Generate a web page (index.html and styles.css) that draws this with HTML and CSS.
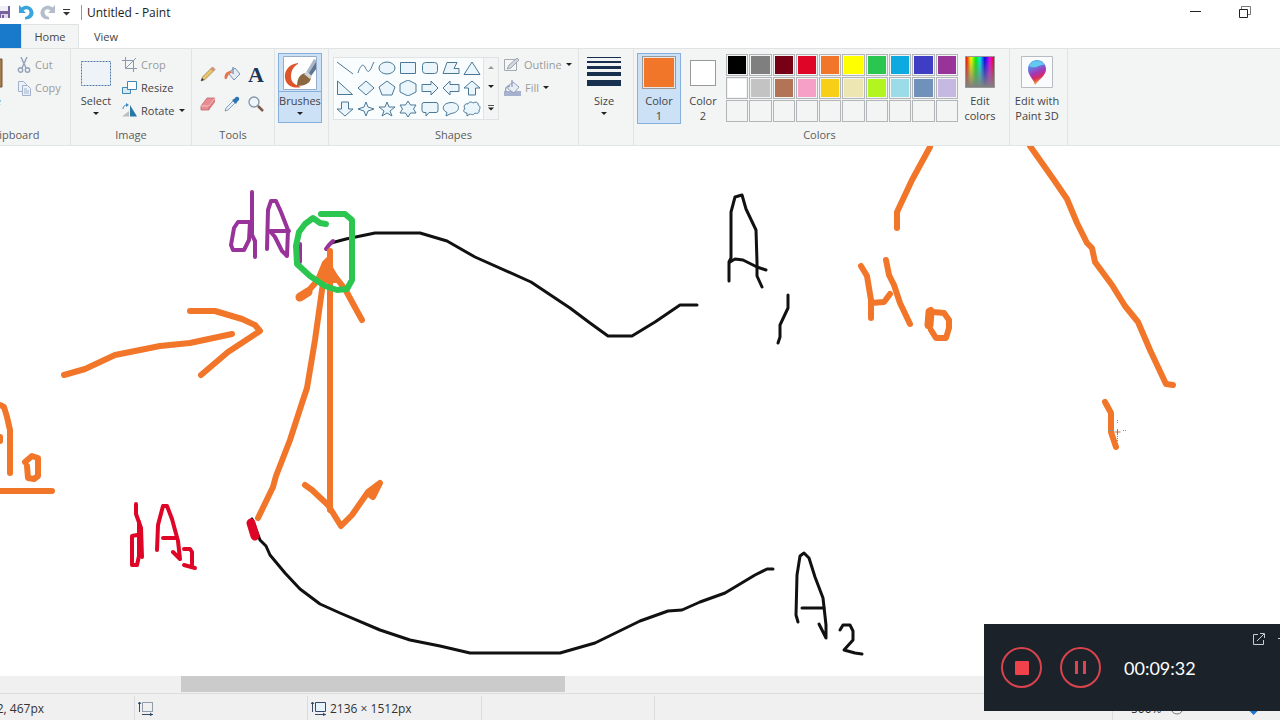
FILE: index.html
```html
<!DOCTYPE html>
<html lang="en">
<head>
    <meta charset="UTF-8">
    <meta name="viewport" content="width=device-width, initial-scale=1.0">
    <title>Untitled - Paint</title>
    <link rel="stylesheet" href="styles.css">
</head>
<body>
    <header class="titlebar">
        <button class="quick save" type="button" aria-label="Save">
            <svg width="14" height="14" viewBox="0 0 14 14"><path d="M0 1H13V13H0Z" fill="#77619f"/><path d="M3 1h8v5H3z" fill="#f1eef5"/><path d="M4 9h7v4H4z" fill="#ddd7e8"/><path d="M5 10h2v3H5z" fill="#77619f"/></svg>
        </button>
        <button class="quick" type="button" aria-label="Undo">
            <svg width="16" height="16" viewBox="0 0 16 16"><path d="M1 1v8h7L5.500 6.500C9 4 12 6 11.500 9 11 11 9.500 12.500 7 13v2.500c6 0 9-3.500 8.500-7.500C14 2 8 0 3.500 3.500Z" fill="#39a5dc"/></svg>
        </button>
        <button class="quick" type="button" aria-label="Redo">
            <svg width="16" height="16" viewBox="0 0 16 16"><path d="M15 1v8H8l2.500-2.500C7 4 4 6 4.500 9 5 11 6.500 12.500 9 13v2.500C3 15.500 0 12 .5 8 2 2 8 0 12.500 3.500Z" fill="#b4bdcb"/></svg>
        </button>
        <button class="quick customize" type="button" aria-label="Customize Quick Access Toolbar">
            <svg width="7" height="7" viewBox="0 0 7 7"><path d="M0 .5h7" stroke="#333"/><path d="M0 3h7L3.500 6.500Z" fill="#333"/></svg>
        </button>
        <h1 class="title">Untitled - Paint</h1>
        <div class="window-buttons">
            <button type="button" aria-label="Minimize"><svg width="12" height="12" viewBox="0 0 12 12"><path d="M0 5.500h11" stroke="#222"/></svg></button>
            <button type="button" aria-label="Restore"><svg width="12" height="12" viewBox="0 0 12 12" fill="none" stroke="#222"><path d="M.5 3.500h8v8h-8z"/><path d="M2.500 3V.5h9v8H9" stroke="#777"/></svg></button>
        </div>
    </header>

    <nav class="tabs">
        <button class="tab file" type="button">File</button>
        <button class="tab active" type="button">Home</button>
        <button class="tab" type="button">View</button>
    </nav>

    <section class="ribbon">
        <div class="group clipboard">
            <div class="group-body">
                <button class="big paste" type="button">
                    <svg width="32" height="32" viewBox="0 0 32 32"><path d="M2 3h29v28H2z" fill="#a47c50" stroke="#765632"/><path d="M7 8h17v20H7z" fill="#fff"/></svg>
                    <span>Paste</span>
                </button>
                <div class="stack">
                    <button class="small disabled" type="button">
                        <svg width="14" height="16" viewBox="0 0 14 16" fill="none" stroke="#94a2bb" stroke-width="1.400"><path d="M4 0l5 11M10 0L5 11"/><circle cx="3.500" cy="13" r="2.200"/><circle cx="10.500" cy="13" r="2.200"/></svg>
                        Cut
                    </button>
                    <button class="small disabled" type="button">
                        <svg width="14" height="16" viewBox="0 0 14 16" fill="#eef2f8" stroke="#a0b0ca"><path d="M1.500 1.500h5l3 3v7h-8z"/><path d="M5.500 5.500h5l3 3v7h-8zM7 9h3M7 11h5M7 13h5"/></svg>
                        Copy
                    </button>
                </div>
            </div>
            <div class="group-label">Clipboard</div>
        </div>

        <div class="group image">
            <div class="group-body">
                <button class="big" type="button">
                    <svg width="30" height="32" viewBox="0 0 30 32"><path d="M.5 5.500h29v24H.5z" fill="#eef3f8" stroke="#5178a6" stroke-dasharray="2 1"/></svg>
                    <span>Select</span>
                    <i class="caret"></i>
                </button>
                <div class="stack">
                    <button class="small disabled" type="button">
                        <svg width="15" height="15" viewBox="0 0 15 15" fill="none" stroke="#8a99ad"><path d="M3.500 0v11.500H15M0 3.500h11.500V15M3.500 11.500L14 1"/></svg>
                        Crop
                    </button>
                    <button class="small" type="button">
                        <svg width="15" height="15" viewBox="0 0 15 15" stroke="#4086b1"><path d="M.5 7.500h8v6h-8z" fill="#d5e9f4"/><path d="M5.500 1.500h9v8h-9z" fill="#fff"/></svg>
                        Resize
                    </button>
                    <button class="small" type="button">
                        <svg width="15" height="15" viewBox="0 0 15 15"><path d="M0 13.500L7 8v5.500Z" fill="#b9bec3"/><path d="M8 2v11.500h7Z" fill="#2778a6"/><path d="M1 6c0-3 2-4 4-4" fill="none" stroke="#3b88c2"/><path d="M4 0l3 2-3 2Z" fill="#3b88c2"/></svg>
                        Rotate <i class="caret"></i>
                    </button>
                </div>
            </div>
            <div class="group-label">Image</div>
        </div>

        <div class="group tools">
            <div class="group-body tool-grid">
                <button type="button" aria-label="Pencil"><svg width="16" height="16" viewBox="0 0 16 16"><path d="M1 15l1.500-4L12.500 1 15 3.500 5 13.500Z" fill="#ecc76a" stroke="#8c744a" stroke-width=".7"/><path d="M12.500 1L15 3.500l-2 2L10.500 3Z" fill="#d99083"/><path d="M1 15l1-3 2 2Z" fill="#333"/></svg></button>
                <button type="button" aria-label="Fill with color"><svg width="17" height="16" viewBox="0 0 17 16"><path d="M5 6l6-4 5 6-6 6-5-6Z" fill="#e3ebf5" stroke="#7a91b0"/><path d="M9 8V1" stroke="#7a91b0" stroke-width="1.300"/><path d="M9 6C5 4 1 6 .5 11c0 3 2 3 3 0L5 8Z" fill="#e5754d"/></svg></button>
                <button type="button" aria-label="Text" class="text-tool">A</button>
                <button type="button" aria-label="Eraser"><svg width="16" height="16" viewBox="0 0 16 16"><path d="M1 10L7 2h8l-6 8v4H1Z" fill="#e78d91" stroke="#bd686d" stroke-width=".8"/><path d="M9 14l6-8V2L9 10Z" fill="#d9767c"/><path d="M1 10h8l6-8" fill="none" stroke="#f7c2c5"/></svg></button>
                <button type="button" aria-label="Color picker"><svg width="16" height="16" viewBox="0 0 16 16"><path d="M1 15l1-3 7-7 2 2-7 7Z" fill="#e2edf6" stroke="#6e8ca8" stroke-width=".8"/><path d="M8 4l4 4 1-2 2-2c1-2-1-4-3-3l-2 2Z" fill="#2c75b3"/></svg></button>
                <button type="button" aria-label="Magnifier"><svg width="16" height="16" viewBox="0 0 16 16"><circle cx="6" cy="6" r="5" fill="#edf6fc" stroke="#8595a6" stroke-width="1.300"/><path d="M10 10l5 5" stroke="#7d5a49" stroke-width="2.500"/></svg></button>
            </div>
            <div class="group-label">Tools</div>
        </div>

        <div class="group brushes">
            <div class="group-body">
                <button class="big selected" type="button">
                    <svg width="34" height="34" viewBox="0 0 34 34"><path d="M.5.5h33v33H.5z" fill="#fff" stroke="#98adc7"/><path d="M15 7C6 8 1 15 2 22c1 8 9 11 16 9-5-2-10-4-10-10C8 14 11 10 15 8Z" fill="#de542b"/><path d="M22 18L31 3l2 1v9l-6 8Z" fill="#a9b7c8"/><path d="M26 17l7-11v7l-5 7Z" fill="#60758f"/><path d="M14 30c0-8 4-13 9-13l5 4c0 6-6 9-14 9Z" fill="#8b6840"/><path d="M21 18l6 5 2-3-5-4Z" fill="#d0d4d7"/></svg>
                    <span>Brushes</span>
                    <i class="caret"></i>
                </button>
            </div>
        </div>

        <div class="group shapes">
            <div class="group-body">
                <div class="gallery">
                    <div class="shape-grid">
                        <button type="button" aria-label="Line"><svg viewBox="0 0 18 16"><path d="M1 2l16 12"/></svg></button>
                        <button type="button" aria-label="Curve"><svg viewBox="0 0 18 16"><path d="M1 13C3 6 6 3 8 7s3 6 5 3c2-2 2-5 4-8"/></svg></button>
                        <button type="button" aria-label="Oval"><svg viewBox="0 0 18 16"><ellipse cx="9" cy="8" rx="8" ry="6"/></svg></button>
                        <button type="button" aria-label="Rectangle"><svg viewBox="0 0 18 16"><path d="M1.500 2.500h15v11h-15z"/></svg></button>
                        <button type="button" aria-label="Rounded rectangle"><svg viewBox="0 0 18 16"><rect x="1.500" y="2.500" width="15" height="11" rx="3"/></svg></button>
                        <button type="button" aria-label="Polygon"><svg viewBox="0 0 18 16"><path d="M5 2.500h10l-3 6h5v5H1Z"/></svg></button>
                        <button type="button" aria-label="Triangle"><svg viewBox="0 0 18 16"><path d="M9 2l8 12.500H1Z"/></svg></button>
                        <button type="button" aria-label="Right triangle"><svg viewBox="0 0 18 16"><path d="M1.500 1l15 13.500h-15Z"/></svg></button>
                        <button type="button" aria-label="Diamond"><svg viewBox="0 0 18 16"><path d="M9 1l8 7-8 7-8-7Z"/></svg></button>
                        <button type="button" aria-label="Pentagon"><svg viewBox="0 0 18 16"><path d="M9 1l8 6-3 8H4L1 7Z"/></svg></button>
                        <button type="button" aria-label="Hexagon"><svg viewBox="0 0 18 16"><path d="M9 0l8 4v8l-8 4-8-4V4Z"/></svg></button>
                        <button type="button" aria-label="Right arrow"><svg viewBox="0 0 18 16"><path d="M1 4.500h9V1l7 7-7 7v-3.500H1Z"/></svg></button>
                        <button type="button" aria-label="Left arrow"><svg viewBox="0 0 18 16"><path d="M17 4.500H8V1L1 8l7 7v-3.500h9Z"/></svg></button>
                        <button type="button" aria-label="Up arrow"><svg viewBox="0 0 18 16"><path d="M5.500 15V8H1l8-7 8 7h-4.500v7Z"/></svg></button>
                        <button type="button" aria-label="Down arrow"><svg viewBox="0 0 18 16"><path d="M5.500 1v7H1l8 7 8-7h-4.500V1Z"/></svg></button>
                        <button type="button" aria-label="Four-point star"><svg viewBox="0 0 18 16"><path d="M9 1l2 5 6 2-6 2-2 5-2-5-6-2 6-2Z"/></svg></button>
                        <button type="button" aria-label="Five-point star"><svg viewBox="0 0 18 16"><path d="M9 1l2 5h6l-5 4 2 5-5-3-5 3 2-5-5-4h6Z"/></svg></button>
                        <button type="button" aria-label="Six-point star"><svg viewBox="0 0 18 16"><path d="M9 0l2.500 4H17l-2.500 4 2.500 4h-5.500L9 16l-2.500-4H1l2.500-4L1 4h5.500Z"/></svg></button>
                        <button type="button" aria-label="Rounded callout"><svg viewBox="0 0 18 16"><path d="M3 1.500h12q2 0 2 2v6q0 2-2 2H8L5 15v-3.500H3q-2 0-2-2v-6q0-2 2-2Z"/></svg></button>
                        <button type="button" aria-label="Oval callout"><svg viewBox="0 0 18 16"><path d="M5 11.500C-1 9 0 2 9 1.500c10 0 10 10 0 11L4 15Z"/></svg></button>
                        <button type="button" aria-label="Cloud callout"><svg viewBox="0 0 18 16"><path d="M4 12C0 12 0 8 2 8 0 5 2 2 5 3c1-3 4-2 5-1 3-2 6 0 5 2 3 1 2 4 1 5 1 3-2 4-4 3-2 3-4 1-5 1l-3 2Z"/></svg></button>
                    </div>
                    <div class="gallery-scroll">
                        <button type="button" aria-label="Row up"><i class="caret up"></i></button>
                        <button type="button" aria-label="Row down"><i class="caret"></i></button>
                        <button type="button" aria-label="More shapes"><svg width="6" height="6" viewBox="0 0 6 6"><path d="M0 .5h6" stroke="#555"/><path d="M0 2.500h6L3 5.500Z" fill="#222"/></svg></button>
                    </div>
                </div>
                <div class="stack">
                    <button class="small disabled" type="button">
                        <svg width="16" height="15" viewBox="0 0 16 15"><path d="M.5 2.500h12v11H.5z" fill="#f5f6f7" stroke="#a2aab2"/><path d="M3 12l2-4 8-7 2 2-8 8Z" fill="#d1d5dc" stroke="#9097a3" stroke-width=".8"/></svg>
                        Outline <i class="caret"></i>
                    </button>
                    <button class="small disabled" type="button">
                        <svg width="17" height="16" viewBox="0 0 17 16"><path d="M0 11h17v5H0z" fill="#a6b1cd"/><path d="M4 6l5-4 6 5-5 6-6-4Z" fill="#e8ecf4" stroke="#929db8"/><path d="M8 7V0M2 12c-1-4 0-6 4-6" fill="none" stroke="#929db8" stroke-width="1.300"/></svg>
                        Fill <i class="caret"></i>
                    </button>
                </div>
            </div>
            <div class="group-label">Shapes</div>
        </div>

        <div class="group size">
            <div class="group-body">
                <button class="big" type="button">
                    <svg width="34" height="32" viewBox="0 0 34 32" fill="#17304f"><path d="M0 1h34v1H0zM0 5h34v2H0zM0 10h34v3H0zM0 16h34v4H0zM0 24h34v6H0z"/></svg>
                    <span>Size</span>
                    <i class="caret"></i>
                </button>
            </div>
        </div>

        <div class="group colors">
            <div class="group-body">
                <button class="big color-slot selected" type="button"><i class="swatch primary"></i><span>Color<br>1</span></button>
                <button class="big color-slot" type="button"><i class="swatch secondary"></i><span>Color<br>2</span></button>
                <div class="palette">
                    <button class="black" type="button" aria-label="Black"></button>
                    <button class="gray" type="button" aria-label="Gray-50%"></button>
                    <button class="dark-red" type="button" aria-label="Dark red"></button>
                    <button class="red" type="button" aria-label="Red"></button>
                    <button class="orange" type="button" aria-label="Orange"></button>
                    <button class="yellow" type="button" aria-label="Yellow"></button>
                    <button class="green" type="button" aria-label="Green"></button>
                    <button class="turquoise" type="button" aria-label="Turquoise"></button>
                    <button class="indigo" type="button" aria-label="Indigo"></button>
                    <button class="purple" type="button" aria-label="Purple"></button>
                    <button class="white" type="button" aria-label="White"></button>
                    <button class="light-gray" type="button" aria-label="Gray-25%"></button>
                    <button class="brown" type="button" aria-label="Brown"></button>
                    <button class="rose" type="button" aria-label="Rose"></button>
                    <button class="gold" type="button" aria-label="Gold"></button>
                    <button class="light-yellow" type="button" aria-label="Light yellow"></button>
                    <button class="lime" type="button" aria-label="Lime"></button>
                    <button class="light-turquoise" type="button" aria-label="Light turquoise"></button>
                    <button class="blue-gray" type="button" aria-label="Blue-gray"></button>
                    <button class="lavender" type="button" aria-label="Lavender"></button>
                    <button type="button" aria-label="Custom color 1"></button>
                    <button type="button" aria-label="Custom color 2"></button>
                    <button type="button" aria-label="Custom color 3"></button>
                    <button type="button" aria-label="Custom color 4"></button>
                    <button type="button" aria-label="Custom color 5"></button>
                    <button type="button" aria-label="Custom color 6"></button>
                    <button type="button" aria-label="Custom color 7"></button>
                    <button type="button" aria-label="Custom color 8"></button>
                    <button type="button" aria-label="Custom color 9"></button>
                    <button type="button" aria-label="Custom color 10"></button>
                </div>
                <button class="big edit-colors" type="button"><i class="spectrum"></i><span>Edit<br>colors</span></button>
            </div>
            <div class="group-label">Colors</div>
        </div>

        <div class="group paint3d">
            <div class="group-body">
                <button class="big" type="button">
                    <svg width="32" height="32" viewBox="0 0 32 32">
                        <defs>
                            <linearGradient id="drop" x1="0" y1="0" x2=".3" y2="1"><stop offset="0" stop-color="#38c5ef"/><stop offset=".35" stop-color="#6978e0"/><stop offset=".6" stop-color="#a436b5"/><stop offset=".8" stop-color="#d92b60"/><stop offset="1" stop-color="#f3a32c"/></linearGradient>
                        </defs>
                        <path d="M.5.5h31v31H.5z" fill="#fafbfc" stroke="#b8bcc0"/>
                        <path d="M14 29C13 23 7 20 7 13c0-5 4-9 9-9s9 4 9 9c0 7-7 10-11 16Z" fill="url(#drop)"/>
                        <path d="M8 10c3-7 13-6 16-1-5-2-8 5-16 1Z" fill="#63c9ef"/>
                    </svg>
                    <span>Edit with<br>Paint 3D</span>
                </button>
            </div>
        </div>
    </section>

    <main class="canvas">
        <svg viewBox="0 146 1280 530" preserveAspectRatio="xMinYMin slice" role="img" aria-label="Curves A1 and A2 with arrows between dA and dA2">
            <!-- curves A1 and A2 -->
            <g class="ink black-ink">
                <polyline points="331,243 346,239 375,233 420,233 447,241 475,257 531,282 570,308 590,323 608,336 632,336 655,322 680,305 697,305"/>
                <polyline points="252,519 260,540 266,546 270,555 285,573 300,589 320,604 340,613 380,630 410,640 440,646 470,653 560,653 595,643 640,621 668,611 682,610 700,602 725,593 755,575 767,569 773,569"/>
                <polyline points="729,281 729,262 731,258 731,212 735,197 742,195 746,209 756,230 757,262 757,276 762,287"/>
                <polyline points="730,262 735,259 743,260 757,267 766,270"/>
                <polyline points="788,295 788,308 780,325 780,337 778,343"/>
                <polyline points="798,622 796,615 797,575 800,556 804,553 809,558 815,577 823,598 826,625 826,638 819,624"/>
                <polyline points="802,608 824,608"/>
                <polyline points="840,630 843,625 850,625 853,631 853,640 844,650 855,653 862,654"/>
            </g>
            <g class="ink purple-ink">
                <polyline points="250,222 238,222 234,228 231,245 233,250 244,250 249,240 250,222"/>
                <polyline points="252,192 252,235 255,241 255,257"/>
                <polyline points="267,249 268,210 271,201 276,201 281,212 288,230 287,256 282,251 275,237 270,231 289,231"/>
                <polyline points="300,244 300,262"/>
                <polyline points="326,249 329,245 333,241"/>
            </g>
            <g class="ink orange-ink">
                <polyline points="64,375 85,369 115,355 160,346 190,343 232,334"/>
                <polyline points="190,311 215,311 242,319 255,325 260,331 228,352 201,375"/>
                <polyline points="330,251 330,510"/>
                <polyline points="326,265 322,290 315,340 307,388 302,403 290,440 276,476 273,487 258,518"/>
                <polygon class="head" points="325,263 330,258 330,268 337,280 318,280"/>
                <polyline points="318,280 310,289 299,298"/>
                <polyline class="heavy" points="308,292 300,297"/>
                <polyline points="333,274 345,289 357,311 362,320"/>
                <polyline points="305,485 312,490 328,505 341,526 352,515 368,492 380,483 373,497 369,494"/>
                <polyline points="0,405 4,407 7,417 10,430 10,473"/>
                <polyline points="0,437 0,441"/>
                <polyline points="25,462 32,456 38,458 38,476 34,479 28,478 27,466"/>
                <polyline points="0,491 52,491"/>
                <polyline points="930,147 912,180 897,212 897,228"/>
                <polyline points="1030,146 1054,180 1067,199 1077,223 1087,243 1092,248 1095,262 1112,285 1125,306 1138,322 1150,350 1166,384 1173,385"/>
                <polyline points="861,266 867,276 871,300 871,318"/>
                <polyline points="871,303 884,302 890,294"/>
                <polyline points="886,260 889,275 894,285 900,303 910,324"/>
                <polyline points="931,310 933,312 944,313 949,320 949,328 946,338 936,338 931,330"/>
                <polyline class="heavy" points="930,312 929,325"/>
                <polyline points="1105,402 1111,413 1111,432 1116,447"/>
            </g>
            <g class="ink red-ink">
                <polyline points="136,504 136,514 141,528 142,557"/>
                <polyline points="139,522 139,556 137,565 132,565 132,536 137,535"/>
                <polyline points="157,550 158,525 163,506 167,506 172,519 178,541 180,559 173,552"/>
                <polyline points="163,538 175,538"/>
                <polyline points="184,549 190,549 192,552 192,565"/>
                <polyline points="184,565 195,568"/>
                <polyline class="blob" points="251,523 255,536"/>
            </g>
            <polyline class="ink green-ink" points="326,224 320,223 313,218 305,224 299,232 296,246 297,264 310,276 325,286 337,290 347,289 352,280 352,220 345,214 321,214"/>
            <g class="cursor">
                <path d="M1108 430.500h5m10 0h4M1117.500 420v4m0 12v5"/>
                <path class="cursor-center" d="M1117.500 429v6m-3-3h6"/>
            </g>
        </svg>
    </main>

    <div class="scrollbar"><div class="thumb"></div></div>

    <footer class="statusbar">
        <div class="status position">982, 467px</div>
        <div class="status selection">
            <svg width="16" height="15" viewBox="0 0 16 15" fill="none" stroke="#344b68"><path d="M4.500 1.500h10v9h-10z" stroke-dasharray="1 1"/><path d="M1.500 11V1M0 3l1.500-2L3 3M4 13.500h11M12 12l2 1.500-2 1.500"/></svg>
        </div>
        <div class="status image-size">
            <svg width="16" height="15" viewBox="0 0 16 15" fill="none" stroke="#344b68"><path d="M4.500 1.500h10v9h-10z" fill="#e6f3fa"/><path d="M1.500 11V1M0 3l1.500-2L3 3M4 13.500h11M12 12l2 1.500-2 1.500"/></svg>
            2136 × 1512px
        </div>
        <div class="status file-size"></div>
        <div class="status zoom">
            <label for="zoom">500%</label>
            <button type="button" aria-label="Zoom out"><svg width="14" height="14" viewBox="0 0 14 14" fill="none" stroke="#777"><circle cx="7" cy="7" r="6"/><path d="M4 7h6"/></svg></button>
            <input type="range" id="zoom" min="0" max="100" value="77">
        </div>
    </footer>

    <aside class="recorder">
        <button class="round" type="button" aria-label="Stop"><svg width="16" height="16" viewBox="0 0 16 16"><rect x="1" y="1" width="14" height="14" rx="1" fill="#f0424b"/></svg></button>
        <button class="round" type="button" aria-label="Pause"><svg width="15" height="15" viewBox="0 0 15 15"><path d="M2 1h3v13H2zM10 1h3v13h-3z" fill="#e0444f"/></svg></button>
        <time>00:09:32</time>
        <div class="recorder-corner">
            <button type="button" aria-label="Pop out"><svg width="12" height="12" viewBox="0 0 12 12" fill="none" stroke="#c9cdd0"><path d="M5 1.500H.5v10h10V7M7 .5h4.500V5M11 1L4 8"/></svg></button>
            <button type="button" aria-label="Minimize recorder"><svg width="12" height="12" viewBox="0 0 12 12" stroke="#c9cdd0"><path d="M0 5.500h12"/></svg></button>
        </div>
    </aside>
</body>
</html>
```
FILE: styles.css
```css
* {
    box-sizing: border-box;
}
body {
    margin: 0;
    height: 100vh;
    display: flex;
    flex-direction: column;
    overflow: hidden;
    background: #fff;
    color: #444;
    font-family: "Open Sans", "Noto Sans", sans-serif;
    font-size: 11px;
    line-height: 15px;
}
button {
    padding: 0;
    border: none;
    background: none;
    color: inherit;
    font: inherit;
}
svg {
    display: block;
    flex: none;
}

/* Title bar */
.titlebar {
    flex: none;
    display: flex;
    align-items: center;
    height: 24px;
}
.quick {
    width: 22px;
    display: flex;
    justify-content: center;
}
.quick.save {
    margin-left: -7px;
}
.quick.customize {
    width: 15px;
}
.title {
    margin: 0 0 0 7px;
    padding-left: 5px;
    border-left: 1px solid #999;
    color: #222;
    font-size: 12px;
    font-weight: normal;
}
.window-buttons {
    display: flex;
    margin-left: auto;
    margin-right: 11px;
}
.window-buttons button {
    width: 49px;
    display: flex;
    justify-content: center;
}

/* Tabs */
.tabs {
    flex: none;
    display: flex;
    height: 24px;
}
.tab {
    width: 54px;
}
.tab.active {
    width: 58px;
    border: 1px solid #dfe3e4;
    border-bottom: none;
    background: #f3f5f5;
}
.tab.file {
    width: 70px;
    margin-left: -49px;
    background: #1979ca;
    color: #fff;
}

/* Ribbon */
.ribbon {
    flex: none;
    display: flex;
    height: 98px;
    border-top: 1px solid #dfe3e4;
    border-bottom: 1px solid #e2e5e5;
    background: #f3f5f5;
}
.group {
    flex: none;
    display: flex;
    flex-direction: column;
    justify-content: space-between;
    padding: 4px 0 0;
    border-right: 1px solid #e1e4e5;
}
.group-body {
    display: flex;
    height: 72px;
}
.group-label {
    height: 18px;
    text-align: center;
    color: #5c5c5c;
}
.brushes,
.size,
.paint3d {
    justify-content: flex-start;
}
.big {
    display: flex;
    flex-direction: column;
    align-items: center;
    width: 44px;
    height: 70px;
    padding-top: 3px;
}
.big span {
    margin-top: 5px;
}
.big .caret {
    margin-top: 4px;
}
.selected {
    border: 1px solid #86b0dc;
    background: #cce0f6;
}
.stack {
    display: flex;
    flex-direction: column;
}
.small {
    display: flex;
    align-items: center;
    gap: 4px;
    height: 23px;
    white-space: nowrap;
}
.disabled {
    color: #9a9a9a;
}
.caret {
    width: 0;
    height: 0;
    border: 3px solid transparent;
    border-top-color: #222;
    border-bottom: none;
}
.caret.up {
    border-top: none;
    border-bottom: 3px solid #999;
}

.clipboard {
    width: 116px;
    margin-left: -45px;
}
.clipboard .group-body {
    padding-left: 10px;
    gap: 8px;
}
.clipboard .group-label {
    padding-left: 4px;
}
.image {
    width: 121px;
}
.image .group-body {
    padding-left: 3px;
    gap: 4px;
}
.tools {
    width: 83px;
}
.tool-grid {
    display: grid;
    grid-template-columns: repeat(3, 24px);
    grid-template-rows: repeat(2, 30px);
    padding: 6px 0 0 4px;
}
.tool-grid button {
    display: flex;
    align-items: center;
    justify-content: center;
}
.tool-grid .text-tool {
    color: #1d3557;
    font-family: "Liberation Serif", serif;
    font-size: 22px;
    font-weight: bold;
}
.brushes {
    width: 54px;
    padding-left: 3px;
}
.brushes .big {
    padding-top: 2px;
}
.brushes .big span {
    width: 100%;
    border-top: 1px solid #86b0dc;
    margin-top: 1px;
    padding-top: 1px;
}

/* Shapes */
.shapes {
    width: 250px;
}
.shapes .group-body {
    padding-left: 4px;
    gap: 5px;
}
.gallery {
    display: flex;
    width: 166px;
    height: 63px;
    margin-top: 4px;
    border: 1px solid #dfe3e5;
}
.shape-grid {
    flex: 1;
    display: grid;
    grid-template-columns: repeat(7, 1fr);
    background: #fafdfe;
}
.shape-grid button {
    display: flex;
    align-items: center;
    justify-content: center;
}
.shape-grid svg {
    width: 18px;
    height: 16px;
    fill: #eaf6fb;
    stroke: #4c7896;
}
.shape-grid button:nth-child(-n+2) svg {
    fill: none;
}
.gallery-scroll {
    display: grid;
    width: 15px;
    border-left: 1px solid #dfe3e5;
}
.gallery-scroll button {
    display: flex;
    align-items: center;
    justify-content: center;
}
.size {
    width: 55px;
    padding-left: 3px;
}

/* Colors */
.colors {
    width: 376px;
}
.colors .group-body {
    padding-left: 3px;
}
.colors .group-label {
    padding-right: 4px;
}
.colors .color-slot {
    height: 71px;
}
.swatch {
    width: 34px;
    height: 34px;
    border: 1px solid #999;
}
.swatch.primary {
    margin-top: -1px;
    margin-bottom: -1px;
    background: #f2762a;
    box-shadow: inset 0 0 0 1px #e8e8e8;
}
.swatch.secondary {
    width: 26px;
    height: 26px;
    margin: 4px 0 2px;
    background: #fff;
}
.palette {
    display: grid;
    grid-template-columns: repeat(10, 1fr);
    grid-template-rows: repeat(3, 22px);
    gap: 1px;
    width: 232px;
    margin-top: 1px;
    margin-left: 1px;
}
.palette button {
    padding: 1px;
    border: 1px solid #b2b6b8;
    background-clip: content-box;
}
.palette .black { background-color: #000; }
.palette .gray { background-color: #7f7f7f; }
.palette .dark-red { background-color: #780014; }
.palette .red { background-color: #df0527; }
.palette .orange { background-color: #f2762a; }
.palette .yellow { background-color: #ff0; }
.palette .green { background-color: #2ac650; }
.palette .turquoise { background-color: #0caae1; }
.palette .indigo { background-color: #3f3dc4; }
.palette .purple { background-color: #983399; }
.palette .white { background-color: #fff; }
.palette .light-gray { background-color: #c3c3c3; }
.palette .brown { background-color: #b27357; }
.palette .rose { background-color: #f7a0c7; }
.palette .gold { background-color: #f6cf16; }
.palette .light-yellow { background-color: #ede5b2; }
.palette .lime { background-color: #b2f51f; }
.palette .light-turquoise { background-color: #9bdce8; }
.palette .blue-gray { background-color: #7091b9; }
.palette .lavender { background-color: #c6b9e1; }
.spectrum {
    width: 30px;
    height: 32px;
    border: 1px solid #999;
    background: linear-gradient(transparent, #808080), linear-gradient(90deg, #e00, #ff0 18%, #0e0 35%, #0ee 50%, #00e 67%, #e0e 85%, #e00);
}
.paint3d {
    width: 58px;
    padding-left: 3px;
}
.paint3d .big {
    width: 48px;
    white-space: nowrap;
}

/* Drawing area */
.canvas {
    flex: 1;
    min-height: 0;
    overflow: hidden;
}
.canvas svg {
    width: 100%;
    height: 100%;
}
.ink {
    fill: none;
    stroke-width: 6px;
    stroke-linecap: round;
    stroke-linejoin: round;
}
.black-ink {
    stroke: #111;
    stroke-width: 3px;
}
.purple-ink {
    stroke: #983399;
    stroke-width: 4px;
}
.orange-ink {
    stroke: #f2762a;
}
.orange-ink .head {
    fill: #f2762a;
}
.orange-ink .heavy {
    stroke-width: 9px;
}
.red-ink {
    stroke: #df0527;
    stroke-width: 4px;
}
.red-ink .blob {
    stroke-width: 9px;
}
.green-ink {
    stroke: #2ac650;
}
.cursor {
    fill: none;
    stroke: #888;
    stroke-dasharray: 1 1;
}
.cursor-center {
    stroke: #c56b35;
    stroke-dasharray: none;
}

/* Scroll bar and status bar */
.scrollbar {
    flex: none;
    height: 18px;
    padding-bottom: 1px;
    border-bottom: 1px solid #dcdcdc;
    background: #f0f0f0;
}
.thumb {
    width: 30%;
    height: 100%;
    margin-left: 181px;
    background: #cbcbcb;
}
.statusbar {
    flex: none;
    display: flex;
    height: 26px;
    padding-top: 2px;
    background: #f0f0f0;
    color: #333;
    font-size: 12px;
}
.status {
    display: flex;
    align-items: center;
    gap: 3px;
    padding-left: 3px;
    border-right: 1px solid #dcdcdc;
    white-space: nowrap;
}
.status.position {
    width: 155px;
    margin-left: -20px;
}
.status.position,
.status.selection,
.status.image-size {
    flex: none;
}
.status.selection {
    width: 173px;
}
.status.image-size {
    width: 174px;
}
.status.file-size {
    width: 173px;
    margin-right: auto;
}
.status.zoom {
    width: 168px;
    padding-left: 18px;
    border-left: 1px solid #dcdcdc;
    border-right: none;
}
.status.zoom label {
    width: 36px;
}
.status.zoom input {
    width: 90px;
    height: 14px;
    margin: 0;
    appearance: none;
    background: transparent;
}
.status.zoom input::-webkit-slider-thumb {
    appearance: none;
    width: 10px;
    height: 14px;
    background: #1979ca;
    clip-path: polygon(0 0, 100% 0, 100% 65%, 50% 100%, 0 65%);
}

/* Recorder panel floats over the window */
.recorder {
    position: fixed;
    right: 0;
    bottom: 9px;
    display: flex;
    align-items: center;
    width: 296px;
    height: 87px;
    padding-left: 17px;
    gap: 18px;
    background: #1b2229;
    color: #fff;
    overflow: hidden;
}
.round {
    display: flex;
    align-items: center;
    justify-content: center;
    width: 41px;
    height: 41px;
    border: 2px solid #d9434e;
    border-radius: 50%;
}
.recorder time {
    margin-left: 5px;
    font-family: Lato, sans-serif;
    font-size: 18px;
    line-height: 24px;
}
.recorder-corner {
    position: absolute;
    top: 9px;
    right: -10px;
    display: flex;
    gap: 13px;
}
```
